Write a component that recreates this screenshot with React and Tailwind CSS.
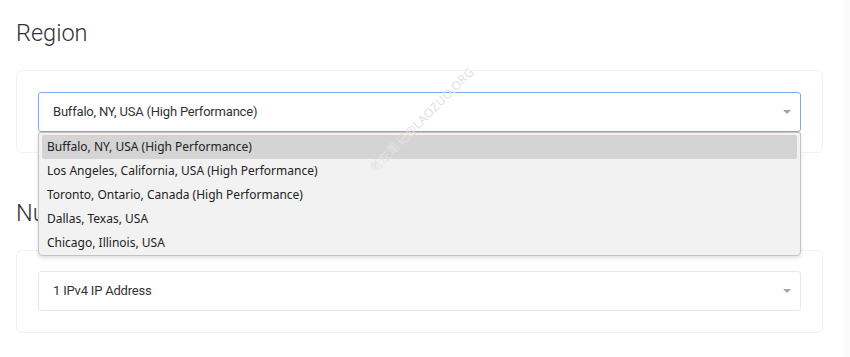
import React from "react";

const items = [
  "Buffalo, NY, USA (High Performance)",
  "Los Angeles, California, USA (High Performance)",
  "Toronto, Ontario, Canada (High Performance)",
  "Dallas, Texas, USA",
  "Chicago, Illinois, USA",
];

function Caret() {
  return (
    <span className="ml-auto mr-[9px] w-0 h-0 border-l-[4px] border-r-[4px] border-t-[4px] border-l-transparent border-r-transparent border-t-[#a3a3a3]" />
  );
}

function Section({ title, headPad, headH, children }) {
  return (
    <section className="flex flex-col">
      <h2 className={headPad + " " + headH + " text-[23.5px] font-light leading-[31px] text-[#333]"}>{title}</h2>
      <div className="flex flex-col h-[83px] rounded-md border border-[#f1f1f1] px-[21px] pt-[21px]">
        {children}
      </div>
    </section>
  );
}

export default function App() {
  return (
    <div className="relative flex w-[850px] h-[357px] bg-white overflow-hidden font-['Roboto',sans-serif] text-[#333]">
      <div className="flex flex-col w-[807px] ml-4">
        <Section title="Region" headPad="pt-[18px]" headH="h-[70px]">
          <div className="relative">
            <div className="flex items-center h-[40px] rounded-[3px] border border-[#80a8f2] bg-white pl-[14px] text-[13px] tracking-[-0.2px]">
              <span>Buffalo, NY, USA (High Performance)</span>
              <Caret />
            </div>
            <div className="absolute z-10 left-0 right-0 top-[40px] flex flex-col rounded-b-[4px] rounded-t-[2px] border border-[#c4c4c4] bg-[#f2f2f2] px-[3px] pt-[2px] shadow-[0_2px_4px_rgba(0,0,0,0.12)] font-['Noto_Sans',sans-serif] text-[12px] text-[#222]">
              {items.map((t, i) => (
                <div
                  key={t}
                  className={
                    "h-[24px] flex items-center pl-[5px] rounded-[2px] " +
                    (i === 0 ? "bg-[#d4d4d4]" : "")
                  }
                >
                  {t}
                </div>
              ))}
            </div>
          </div>
        </Section>
        <Section title="Number of IPv4 Addresses" headPad="pt-[45px]" headH="h-[97px]">
          <div className="flex items-center h-[40px] rounded-[3px] border border-[#e8e8e8] bg-white pl-[14px] text-[13px] tracking-[-0.2px] -mt-px">
            <span>1 IPv4 IP Address</span>
            <Caret />
          </div>
        </Section>
      </div>
      <div className="ml-auto w-[7px] h-full bg-[#fbfbfb]" />
      <div className="absolute left-[422px] top-[120px] -translate-x-1/2 -translate-y-1/2 -rotate-45 whitespace-nowrap text-[12px] tracking-[0.5px] text-[#e2e2e2] font-['Noto_Sans','Noto_Sans_CJK_SC',sans-serif] z-20 pointer-events-none">
        老左笔记@LAOZUO.ORG
      </div>
    </div>
  );
}
